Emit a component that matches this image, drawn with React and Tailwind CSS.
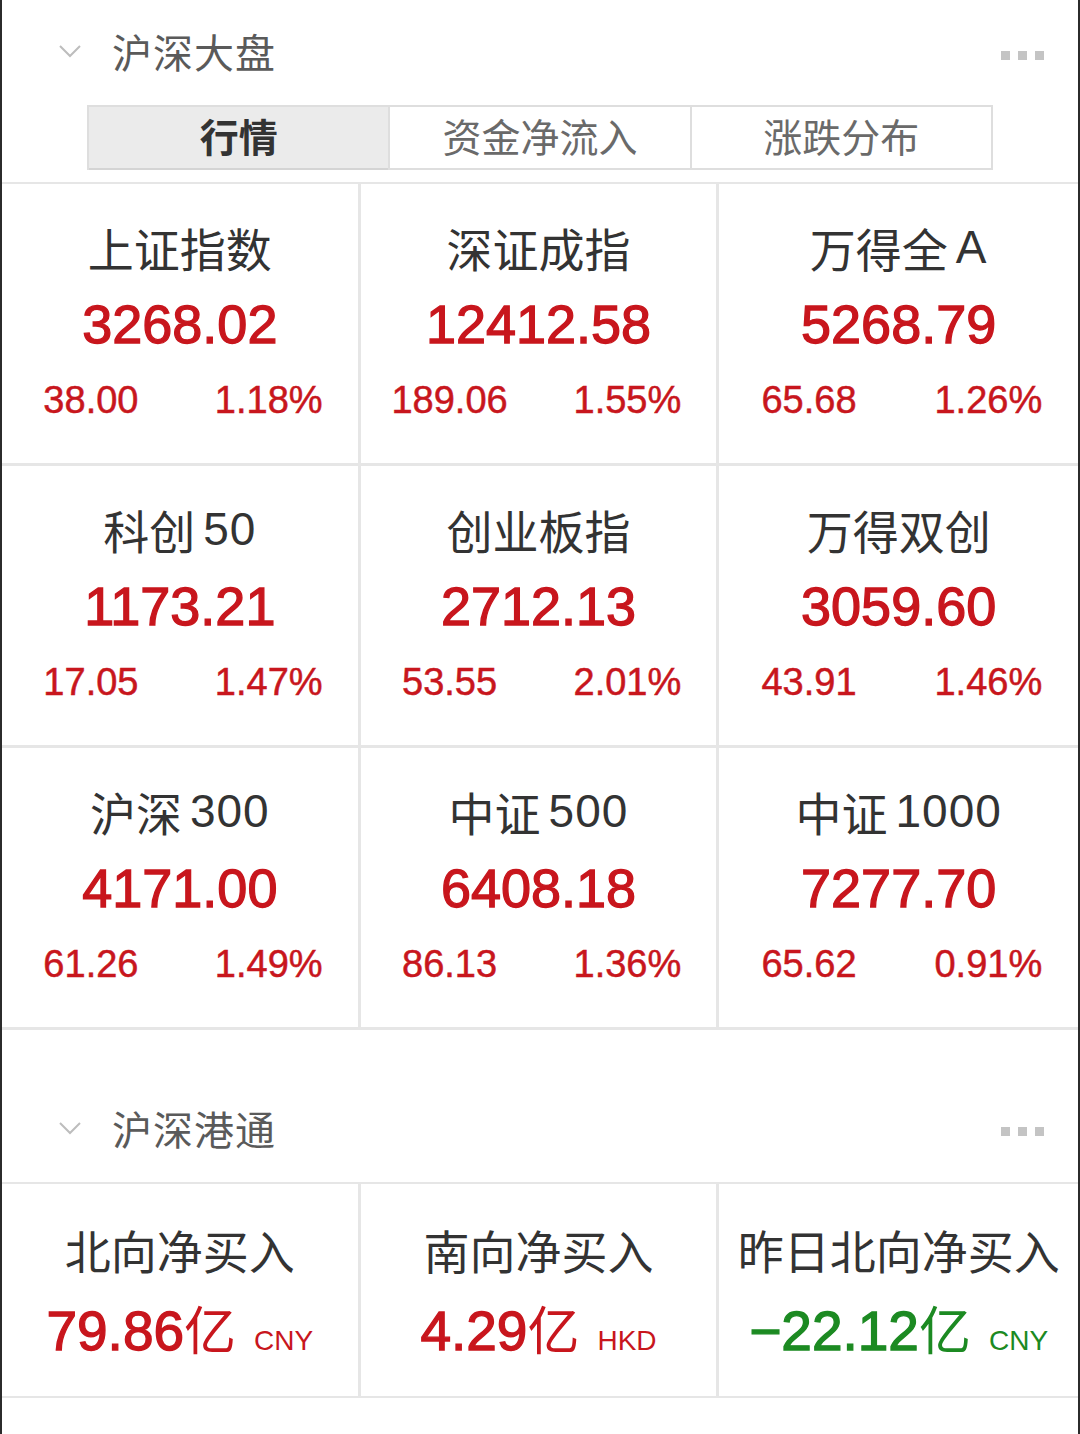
import React from "react";

const CJK = { fontFamily: '"Noto Sans CJK SC", "Noto Sans", sans-serif' };
const NUM = { fontFamily: '"Liberation Sans", Arial, "Noto Sans CJK SC", sans-serif' };

const indices = [
  ["上证指数", "", "3268.02", "38.00", "1.18%"],
  ["深证成指", "", "12412.58", "189.06", "1.55%"],
  ["万得全", "A", "5268.79", "65.68", "1.26%"],
  ["科创", "50", "1173.21", "17.05", "1.47%"],
  ["创业板指", "", "2712.13", "53.55", "2.01%"],
  ["万得双创", "", "3059.60", "43.91", "1.46%"],
  ["沪深", "300", "4171.00", "61.26", "1.49%"],
  ["中证", "500", "6408.18", "86.13", "1.36%"],
  ["中证", "1000", "7277.70", "65.62", "0.91%"],
];

const flows = [
  ["北向净买入", "79.86", "CNY", "text-[#c8161d]"],
  ["南向净买入", "4.29", "HKD", "text-[#c8161d]"],
  ["昨日北向净买入", "−22.12", "CNY", "text-[#1c8a22]"],
];

function Chevron() {
  return (
    <svg width="24" height="16" viewBox="0 0 24 16" className="shrink-0">
      <path d="M2 3 L12 13 L22 3" fill="none" stroke="#bdbdbd" strokeWidth="2" />
    </svg>
  );
}

function Dots() {
  return (
    <div className="flex gap-[8px] mr-[34px] mt-[8px]">
      <div className="w-[9px] h-[9px] bg-[#c4c4c4]" />
      <div className="w-[9px] h-[9px] bg-[#c4c4c4]" />
      <div className="w-[9px] h-[9px] bg-[#c4c4c4]" />
    </div>
  );
}

function Header({ title, className }) {
  return (
    <div className={"flex items-center " + className}>
      <div className="ml-[56px] mr-[30px] flex items-center">
        <Chevron />
      </div>
      <div className="text-[40px] leading-none text-[#5a5a5a] tracking-[1px]" style={CJK}>
        {title}
      </div>
      <div className="flex-1" />
      <Dots />
    </div>
  );
}

export default function App() {
  return (
    <div className="w-[1080px] h-[1434px] bg-white border-l-2 border-r-2 border-[#2b2b2b] overflow-hidden">
      <Header title="沪深大盘" className="h-[105px] pb-[3px]" />
      <div className="ml-[85px] w-[906px] h-[65px] flex border-2 border-[#dedede]" style={CJK}>
        <div className="flex-1 flex items-center justify-center pb-[4px] bg-[#ebebeb] border-b-2 border-[#d4d4d4] -mb-[2px] text-[39px] font-bold text-[#333]">
          行情
        </div>
        <div className="flex-1 flex items-center justify-center pb-[4px] border-l-2 border-[#dedede] text-[39px] text-[#6a6a6a]">
          资金净流入
        </div>
        <div className="flex-1 flex items-center justify-center pb-[4px] border-l-2 border-[#dedede] text-[39px] text-[#6a6a6a]">
          涨跌分布
        </div>
      </div>
      <div className="mt-[12px] grid grid-cols-3 border-t-2 border-[#e6e6e6]">
        {indices.map(([name, suffix, val, chg, pct], i) => (
          <div
            key={name + suffix}
            className={
              "h-[282px] flex flex-col items-center border-b-[3px] border-[#e6e6e6] " +
              (i % 3 !== 2 ? "border-r-[3px]" : "")
            }
          >
            <div className="mt-[39px] h-[48px] flex items-center text-[46px] leading-none text-[#333]" style={CJK}>
              <span>{name}</span>
              {suffix && (
                <span className="ml-[8px] tracking-[1px]" style={NUM}>
                  {suffix}
                </span>
              )}
            </div>
            <div
              className="mt-[27px] h-[52px] flex items-center text-[54px] leading-none text-[#c8161d] [-webkit-text-stroke:1.3px_#c8161d]"
              style={NUM}
            >
              {val}
            </div>
            <div
              className="mt-[31px] w-full grid grid-cols-2 text-[38px] leading-none text-[#c8161d] [-webkit-text-stroke:0.5px_#c8161d]"
              style={NUM}
            >
              <div className="text-center">{chg}</div>
              <div className="text-center">{pct}</div>
            </div>
          </div>
        ))}
      </div>
      <Header title="沪深港通" className="mt-[55px] h-[99px] pb-[12px] border-b-2 border-[#e6e6e6]" />
      <div className="grid grid-cols-3 border-b-2 border-[#e6e6e6]">
        {flows.map(([name, val, cur, color], i) => (
          <div
            key={name}
            className={"h-[212px] flex flex-col items-center " + (i !== 2 ? "border-r-[3px] border-[#e6e6e6]" : "")}
          >
            <div className="mt-[41px] h-[48px] flex items-center text-[46px] leading-none text-[#333]" style={CJK}>
              {name}
            </div>
            <div className={"mt-[29px] h-[56px] flex items-baseline " + color}>
              <span className="text-[55px] leading-none [-webkit-text-stroke:1.3px_currentColor]" style={NUM}>
                {val}
              </span>
              <span className="text-[52px] leading-none" style={CJK}>亿</span>
              <span className="ml-[18px] text-[28px] leading-none" style={NUM}>{cur}</span>
            </div>
          </div>
        ))}
      </div>
    </div>
  );
}
